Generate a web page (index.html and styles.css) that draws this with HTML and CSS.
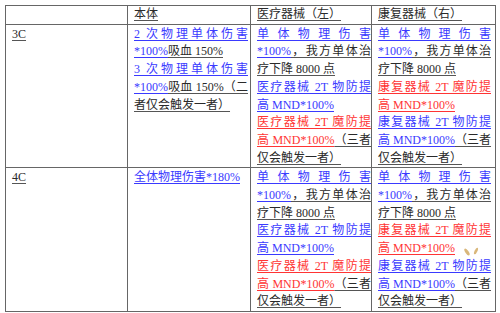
FILE: index.html
```html
<!DOCTYPE html>
<html lang="zh-CN">
<head>
<meta charset="utf-8">
<title>技能表</title>
<link rel="stylesheet" href="styles.css">
</head>
<body>
<div class="wrap">
<table class="grid">
  <colgroup>
    <col class="w1"><col class="w2"><col class="w3"><col class="w4">
  </colgroup>
  <tr class="head">
    <td></td>
    <td><span class="k">本体</span></td>
    <td><span class="k">医疗器械（左）</span></td>
    <td><span class="k">康复器械（右）</span></td>
  </tr>
  <tr class="row">
    <td><span class="k">3C</span></td>
    <td>
      <div><span class="b">2 次物理单体伤害*100%</span><span class="k">吸血 150%</span></div>
      <div><span class="b">3 次物理单体伤害*100%</span><span class="k">吸血 150%（二者仅会触发一者）</span></div>
    </td>
    <td class="mid">
      <div><span class="b">单体物理伤害*100%</span><span class="k">，我方单体治疗下降 8000 点</span></div>
      <div><span class="b">医疗器械 2T 物防提高 MND*100%</span></div>
      <div><span class="r">医疗器械 2T 魔防提高 MND*100%</span><span class="k">（三者仅会触发一者）</span></div>
    </td>
    <td>
      <div><span class="b">单体物理伤害*100%</span><span class="k">，我方单体治疗下降 8000 点</span></div>
      <div><span class="r">康复器械 2T 魔防提高 MND*100%</span></div>
      <div><span class="b">康复器械 2T 物防提高 MND*100%</span><span class="k">（三者仅会触发一者）</span></div>
    </td>
  </tr>
  <tr class="row">
    <td><span class="k">4C</span></td>
    <td>
      <div><span class="b">全体物理伤害*180%</span></div>
    </td>
    <td class="mid">
      <div><span class="b">单体物理伤害*100%</span><span class="k">，我方单体治疗下降 8000 点</span></div>
      <div><span class="b">医疗器械 2T 物防提高 MND*100%</span></div>
      <div><span class="r">医疗器械 2T 魔防提高 MND*100%</span><span class="k">（三者仅会触发一者）</span></div>
    </td>
    <td>
      <div><span class="b">单体物理伤害*100%</span><span class="k">，我方单体治疗下降 8000 点</span></div>
      <div><span class="r">康复器械 2T 魔防提高 MND*100%</span></div>
      <div><span class="b">康复器械 2T 物防提高 MND*100%</span><span class="k">（三者仅会触发一者）</span></div>
    </td>
  </tr>
</table>
<svg class="mark" width="20" height="12" viewBox="0 0 20 12">
  <ellipse cx="5" cy="6" rx="1.6" ry="4" transform="rotate(-35 5 6)" fill="#d9b77a"/>
  <ellipse cx="14" cy="5" rx="1.4" ry="3.6" transform="rotate(25 14 5)" fill="#d9b77a"/>
</svg>
</div>
</body>
</html>
```
FILE: styles.css
```css
html, body {
  margin: 0;
  padding: 0;
  background: #fff;
}
body {
  font-family: "Liberation Serif", "Noto Sans CJK SC", serif;
  font-size: 12px;
  line-height: 17.7px;
  color: #222;
}
.wrap {
  position: relative;
  padding: 5px 0 0 5px;
}
.grid {
  border-collapse: collapse;
  table-layout: fixed;
  width: 491px;
}
.w1 { width: 122px; }
.w2 { width: 123px; }
.w3 { width: 121px; }
.w4 { width: 124px; }
.grid td {
  border: 1px solid #666;
  vertical-align: top;
  padding: 1px 2px 0 6px;
  text-align: justify;
}
.grid td.mid {
  padding-right: 0;
}
.grid td:last-child {
  padding-right: 4px;
}
.head td {
  padding-top: 0;
  padding-bottom: 0;
}
.row td {
  height: 141px;
}
.b, .r, .k {
  text-decoration: underline;
  text-underline-offset: 2px;
}
.b { color: #3a3aff; }
.r { color: #ff3434; }
.k { color: #2a2a2a; text-decoration-color: #555; }
.mark {
  position: absolute;
  left: 462px;
  top: 246px;
}
```
